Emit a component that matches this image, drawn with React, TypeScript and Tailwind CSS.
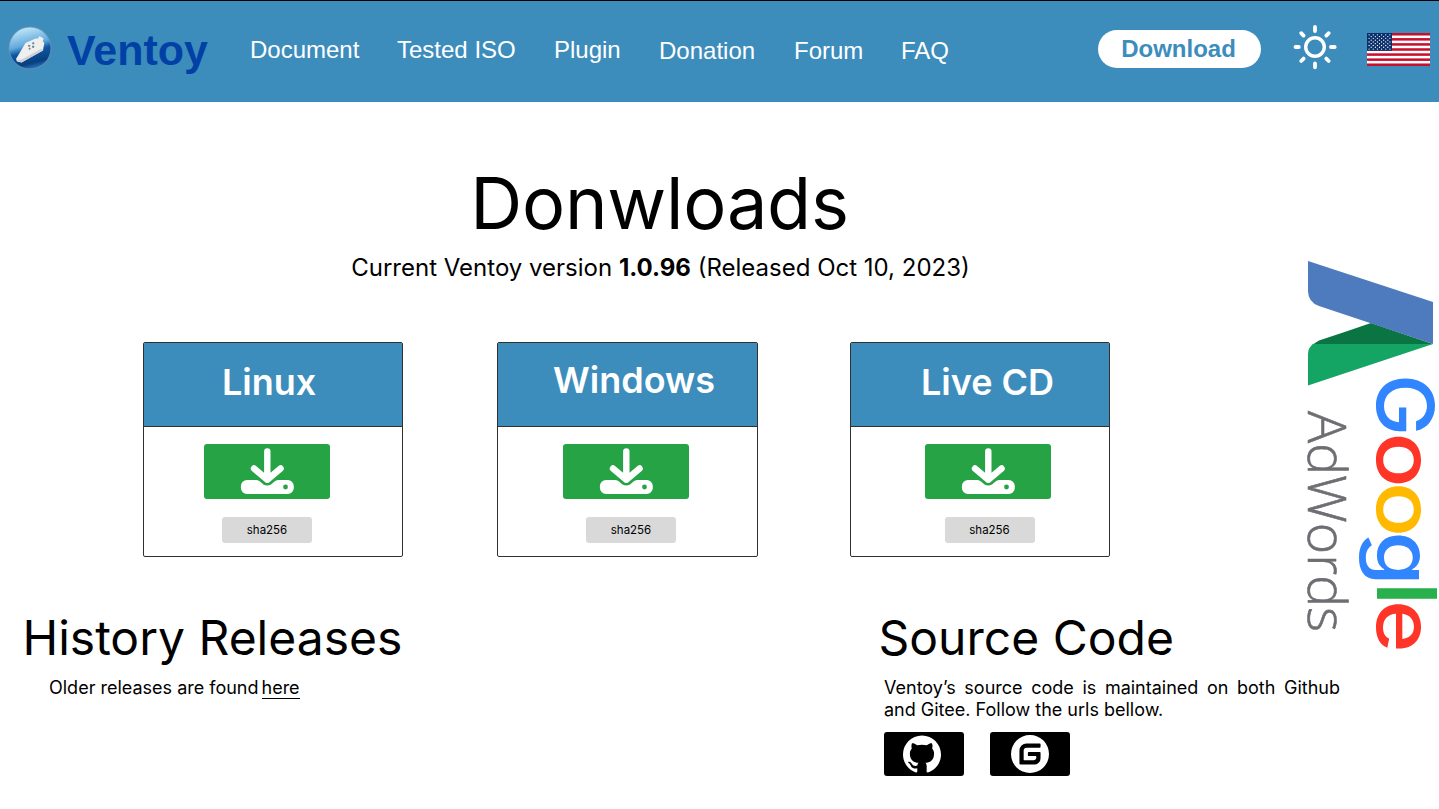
import React from 'react';
import { SiGitee, SiGithub } from 'react-icons/si';

function VentoyLogo() {
  return (
    <svg className="block h-[46px] w-[46px]" viewBox="0 0 46 46">
      <defs>
        <linearGradient id="ball" x1="0.35" y1="0" x2="0.6" y2="1">
          <stop offset="0" stopColor="#c3eafb" />
          <stop offset="0.42" stopColor="#62a9dc" />
          <stop offset="0.58" stopColor="#0e58a3" />
          <stop offset="0.85" stopColor="#073f80" />
          <stop offset="1" stopColor="#2e7dba" />
        </linearGradient>
      </defs>
      <circle cx="23" cy="23" r="21" fill="url(#ball)" stroke="#6d93b4" strokeWidth="0.8" />
      <path d="M9 34 L18.500 18 L28.500 13.500 L31 13.500 L32.500 11 L36.700 13.500 L35.700 16 L37.300 18 L36 25.500 L14.500 37.500 L10 36.500 Z" fill="#efeff0" />
      <path d="M9.500 35 L14.500 37.500 L36 25.500 L35 23.500 L14.500 34.500 Z" fill="#cdd0d4" />
      <path d="M21 20.500l2.200.6M25.500 17.500l1.500 1.500M22 24.500l1.200-1.500M25 21.500l2.200.5" stroke="#6f8c9f" strokeWidth="1.800" />
    </svg>
  );
}

function SunIcon() {
  return (
    <svg className="block h-[46px] w-[46px]" viewBox="0 0 46 46" fill="none" stroke="#fff" strokeLinecap="round">
      <circle cx="23" cy="23" r="9.300" strokeWidth="3.400" />
      <path
        strokeWidth="3.800"
        d="M23 2.900V7M23 39.500v3.800M3.500 23h3.300M39 23h3.700M9.200 9.200l2.400 2.400M36.700 9.200l-2.400 2.400M9.200 37l2.400-2.400M36.700 37l-2.400-2.400"
      />
    </svg>
  );
}

const stripes = [0, 2, 4, 6, 8, 10, 12];
const starRows = [0, 1, 2, 3, 4, 5, 6, 7, 8];

function Flag() {
  return (
    <svg className="block h-[33px] w-[63px]" viewBox="0 0 63 33">
      <rect width="63" height="33" fill="#fff" />
      {stripes.map((s) => (
        <rect key={s} y={(s * 33) / 13} width="63" height={33 / 13} fill="#c8102e" />
      ))}
      <rect width="25" height="17.770" fill="#0a2f6b" />
      {starRows.map((r) =>
        (r % 2 ? [0, 1, 2, 3, 4] : [0, 1, 2, 3, 4, 5]).map((c) => (
          <circle key={`${r}-${c}`} cx={2.1 + c * 4.16 + (r % 2 ? 2.08 : 0)} cy={1.8 + r * 1.78} r="0.65" fill="#fff" />
        )),
      )}
    </svg>
  );
}

function DownloadIcon() {
  return (
    <svg className="block h-[55px] w-[126px]" viewBox="0 0 126 55" fill="none">
      <path
        d="M43 36 H52.500 Q54.500 36 56 37.600 L59.500 40.500 Q63.300 42.700 67 40.500 L70.500 37.600 Q72 36 74 36 H83.500 A6 6 0 0 1 89.800 42 V44 A6 6 0 0 1 83.500 50 H43 A6 6 0 0 1 36.900 44 V42 A6 6 0 0 1 43 36Z"
        fill="#fff"
      />
      <circle cx="81.500" cy="43" r="2.400" fill="#26a344" />
      <path d="M63.300 7.500V34M50 24.500L63.300 35.800L76.600 24.500" stroke="#fff" strokeWidth="6.400" strokeLinecap="round" strokeLinejoin="round" />
    </svg>
  );
}

function AdWordsBanner() {
  return (
    <svg className="block h-[400px] w-[139px]" viewBox="1300 255 139 400">
      <path d="M1319 340.500 Q1345 332 1371 323 L1433 344 L1390 348 L1312 345Z" fill="#0b7443" />
      <path d="M1313 344H1433L1308 385.500V354Q1308 348 1313 344Z" fill="#14a565" />
      <path d="M1308 261L1433 302V344L1319 306Q1308 302 1308 291Z" fill="#4e7bbd" />
      <g fontFamily="Inter, sans-serif" fontWeight="550" fontSize="79">
        <text transform="translate(1377 374) rotate(90)" textLength="62" lengthAdjust="spacingAndGlyphs" fill="#3186ff">G</text>
        <text transform="translate(1376.500 432.500) rotate(90)" textLength="55" lengthAdjust="spacingAndGlyphs" fill="#ff3527">o</text>
        <text transform="translate(1376.500 482) rotate(90)" textLength="55" lengthAdjust="spacingAndGlyphs" fill="#ffba00">o</text>
        <text transform="translate(1376 531.500) rotate(90)" textLength="54" lengthAdjust="spacingAndGlyphs" fill="#3186ff">g</text>
        <text transform="translate(1376.500 582.500) rotate(90)" fontSize="82" fontWeight="600" textLength="22" lengthAdjust="spacingAndGlyphs" fill="#27b04c">l</text>
        <text transform="translate(1376.500 600) rotate(90)" textLength="52.500" lengthAdjust="spacingAndGlyphs" fill="#ff3527">e</text>
      </g>
      <text
        transform="translate(1308 411) rotate(90)"
        fontFamily="Open Sans, sans-serif"
        fontWeight="300"
        fontSize="54"
        textLength="221"
        lengthAdjust="spacingAndGlyphs"
        fill="#6d6e72"
        stroke="#6d6e72"
        strokeWidth="0.600"
      >
        AdWords
      </text>
    </svg>
  );
}

type CardProps = { title: string; cardClass: string; titleClass: string; buttonClass: string; hashClass: string };

function ReleaseCard({ title, cardClass, titleClass, buttonClass, hashClass }: CardProps) {
  return (
    <section className={`flex h-[215px] flex-col items-start rounded-[2px] border border-[#303030] bg-white ${cardClass}`}>
      <div className="h-[84px] w-full border-b border-[#303030] bg-[#3d8dbc]">
        <h2 className={`whitespace-nowrap text-[36px] font-semibold leading-[44px] text-white ${titleClass}`}>{title}</h2>
      </div>
      <button className={`mt-[17px] h-[55px] w-[126px] rounded-[3px] bg-[#26a344] ${buttonClass}`}>
        <DownloadIcon />
      </button>
      <button className={`mt-[18px] h-[26px] w-[90px] rounded-[3px] bg-[#d9d9d9] text-[11.500px] leading-[26px] ${hashClass}`}>
        sha256
      </button>
    </section>
  );
}

export default function App() {
  return (
    <div className="h-[809px] w-[1439px] overflow-hidden bg-white font-['Inter',sans-serif] text-black">
      <header className="flex h-[102px] items-start border-t border-black bg-[#3d8dbc] font-['Liberation_Sans',sans-serif] text-white">
        <a className="ml-[7px] mt-[24px]"><VentoyLogo /></a>
        <span className="ml-[14px] mt-[24px] w-[183px] text-[43px] font-bold leading-[50px] text-[#0141a5]">Ventoy</span>
        <nav className="mt-[35px] flex w-[848px] text-[24px] leading-[28px]">
          <a className="w-[147px]">Document</a>
          <a className="w-[157px]">Tested ISO</a>
          <a className="w-[105px]">Plugin</a>
          <a className="w-[135px] pt-px">Donation</a>
          <a className="w-[107px] pt-px">Forum</a>
          <a className="pt-px">FAQ</a>
        </nav>
        <button className="mt-[29px] h-[38px] w-[163px] rounded-full bg-white pb-px pr-[2px] text-[24px] font-bold leading-[37px] text-[#3d8dbc]">
          Download
        </button>
        <button className="ml-[31px] mt-[23px]"><SunIcon /></button>
        <div className="ml-[29px] mt-[32px]"><Flag /></div>
      </header>

      <div className="flex">
        <main className="w-[1300px]">
          <div className="w-[1321px] pt-[57px] text-center">
            <h1 className="pr-[2px] text-[72px] leading-[88px] tracking-[-0.200px]">Donwloads</h1>
            <p className="mt-[6px] text-[24px] leading-[30px]">
              Current Ventoy version <b>1.0.96</b> (Released Oct 10, 2023)
            </p>
          </div>

          <div className="ml-[143px] mt-[59px] flex">
            <ReleaseCard title="Linux" cardClass="w-[260px]" titleClass="pl-[78px] pt-[17px]" buttonClass="ml-[59.500px]" hashClass="ml-[78px]" />
            <div className="ml-[94px]">
              <ReleaseCard title="Windows" cardClass="w-[261px]" titleClass="pl-[55px] pt-[15px]" buttonClass="ml-[65px]" hashClass="ml-[88px]" />
            </div>
            <div className="ml-[92px]">
              <ReleaseCard title="Live CD" cardClass="w-[260px]" titleClass="pl-[70px] pt-[17px]" buttonClass="ml-[74px]" hashClass="ml-[93.500px]" />
            </div>
          </div>

          <div className="mt-[52px] flex whitespace-nowrap">
            <section className="w-[860px] shrink-0 pl-[22px]">
              <h2 className="pl-[0.500px] text-[48px] leading-[58px]">History Releases</h2>
              <p className="mt-[10px] flex pl-[27px] text-[18px] leading-[21px]">
                <span className="w-[212.500px]">Older releases are found</span>
                <a className="border-b border-black">here</a>
              </p>
            </section>
            <section className="ml-[18px] w-[462px] shrink-0">
              <h2 className="pl-[0.500px] text-[48px] leading-[58px]">Source Code</h2>
              <p className="ml-[6px] mt-[10px] w-[456px] whitespace-normal text-justify text-[18px] leading-[22px]">
                Ventoy’s source code is maintained on both Github and Gitee. Follow the urls bellow.
              </p>
              <div className="ml-[6px] mt-[11px] flex gap-[26px]">
                <a className="flex h-[44px] w-[80px] items-center justify-center rounded-[3px] bg-black pr-[4px] text-white">
                  <SiGithub size={38} />
                </a>
                <a className="flex h-[44px] w-[80px] items-center justify-center rounded-[3px] bg-black text-white">
                  <SiGitee size={38} />
                </a>
              </div>
            </section>
          </div>
        </main>
        <aside className="pt-[153px]">
          <AdWordsBanner />
        </aside>
      </div>
    </div>
  );
}
